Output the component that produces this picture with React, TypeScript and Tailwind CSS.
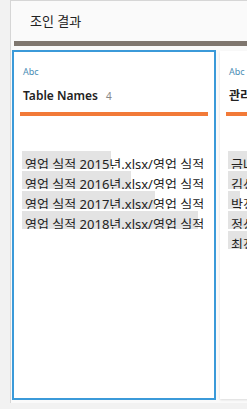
const font = { fontFamily: '"Noto Sans", "Noto Sans CJK KR", sans-serif' };

const tableRows = [
  { text: "영업 실적 2015년.xlsx/영업 실적", w: 89 },
  { text: "영업 실적 2016년.xlsx/영업 실적", w: 109 },
  { text: "영업 실적 2017년.xlsx/영업 실적", w: 133 },
  { text: "영업 실적 2018년.xlsx/영업 실적", w: 176 },
];

const managerRows = [
  { text: "금나래", w: 40 },
  { text: "김선영", w: 40 },
  { text: "박진수", w: 12 },
  { text: "정상훈", w: 40 },
  { text: "최진호", w: 40 },
];

function Row({ text, w }: { text: string; w: number }) {
  return (
    <div className="relative h-[18px] overflow-hidden whitespace-nowrap">
      <div className="absolute left-0 top-0 h-full bg-[#e3e3e3]" style={{ width: w }} />
      <span className="relative pl-[3px] text-[13px] leading-[18px] text-[#222]">{text}</span>
    </div>
  );
}

function Column({
  title,
  count,
  rows,
  selected,
}: {
  title: string;
  count?: number;
  rows: { text: string; w: number }[];
  selected?: boolean;
}) {
  return (
    <div
      className={
        selected
          ? "w-[204px] h-[350px] shrink-0 border-2 border-[#3b9ad9] bg-white"
          : "w-[204px] h-[348px] shrink-0 mt-[1px] bg-white shadow-[0_1px_2px_rgba(0,0,0,0.12)]"
      }
    >
      <div className={(selected ? "pt-[14px]" : "pt-[15px]") + " pl-[9px] text-[9px] leading-[12px] text-[#4a8db5]"}>
        Abc
      </div>
      <div className="mt-[10px] pl-[9px] flex items-baseline gap-[8px] leading-[16px] whitespace-nowrap">
        <span className="text-[12px] font-semibold text-[#222]">{title}</span>
        {count !== undefined && <span className="text-[10px] text-[#888]">{count}</span>}
      </div>
      <div className="mt-[8px] mx-[6px] h-[4px] bg-[#f27a38]" />
      <div className="mt-[35px] pl-[8px] pr-[2px] flex flex-col gap-[2px]">
        {rows.map((r) => (
          <Row key={r.text} text={r.text} w={r.w} />
        ))}
      </div>
    </div>
  );
}

export default function App() {
  return (
    <div className="w-[247px] h-[409px] bg-[#f2f2f2] flex overflow-hidden" style={font}>
      <div className="w-[10px] shrink-0" />
      <div className="flex-1 h-[403px] flex flex-col border-l border-t border-[#d6d6d6] bg-[#fafafa] overflow-hidden">
        <div className="h-[40px] shrink-0 pl-[19px] pt-[11px] text-[13px] leading-[18px] text-[#222]">
          조인 결과
        </div>
        <div className="ml-[3px] h-[5px] shrink-0 bg-[#7f776f]" />
        <div className="mt-[4px] ml-[1px] flex gap-[4px]">
          <Column title="Table Names" count={4} rows={tableRows} selected />
          <Column title="관리자" rows={managerRows} />
        </div>
      </div>
    </div>
  );
}
